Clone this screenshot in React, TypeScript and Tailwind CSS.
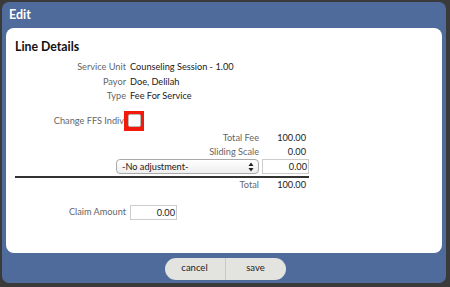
import React from "react";

export default function App() {
  const font = { fontFamily: "Lato, 'Open Sans', sans-serif" };
  return (
    <div style={font} className="w-[450px] h-[287px] bg-[#3a3a3a] pt-[2px] pl-[2px] pr-[4px] pb-[4px]">
      <div className="h-full w-full bg-[#4f6b9b] rounded-[7px] flex flex-col">
        <div className="h-[26px] px-[7px] flex items-center text-white text-[12.5px] font-bold pt-[1px]">Edit</div>
        <div className="mx-[4px] flex-1 bg-white rounded-[8px] pl-[9px] pt-[10px] text-[9.2px] text-[#1a1a1a]">
          <div className="text-[12.3px] font-bold text-[#111] leading-[18px]">Line Details</div>
          <div className="mt-[4px] flex flex-col">
            {[
              ["Service Unit", "Counseling Session - 1.00"],
              ["Payor", "Doe, Delilah"],
              ["Type", "Fee For Service"],
            ].map(([l, v]) => (
              <div key={l} className="flex h-[14.5px] items-center">
                <div className="w-[111px] text-right text-[#666]">{l}</div>
                <div className="ml-[4px]">{v}</div>
              </div>
            ))}
          </div>
          <div className="mt-[7px] flex items-center h-[20px]">
            <div className="w-[109px] text-right text-[#666] whitespace-nowrap">Change FFS Indiv</div>
            <div className="w-[20px] h-[20px] bg-[#f21a0a] flex items-center justify-center">
              <div className="w-[13px] h-[13px] bg-white border border-[#bbb] rounded-[2px]" />
            </div>
          </div>
          <div className="flex flex-col w-[294px]">
            <div className="flex h-[14.5px] items-center">
              <div className="w-[244px] text-right text-[#666]">Total Fee</div>
              <div className="w-[47px] text-right">100.00</div>
            </div>
            <div className="flex h-[14px] items-center">
              <div className="w-[244px] text-right text-[#666]">Sliding Scale</div>
              <div className="w-[47px] text-right">0.00</div>
            </div>
            <div className="flex items-center h-[15px]">
              <div className="ml-[101px] w-[143px] h-[15px] border border-[#aaa] rounded-[4px] bg-gradient-to-b from-white to-[#eee] flex items-center pl-[5px] pr-[4px]">
                <span className="flex-1">-No adjustment-</span>
                <svg width="6" height="10" viewBox="0 0 6 10">
                  <path d="M3 0.5 L5.5 4 H0.5 Z M3 9.5 L5.5 6 H0.5 Z" fill="#222" />
                </svg>
              </div>
              <div className="ml-[3px] w-[47px] h-[15px] border border-[#ccc] text-right pr-[1px] leading-[13px]">0.00</div>
            </div>
            <div className="mt-[2px] h-[1.5px] bg-[#333] w-[294px]" />
            <div className="flex h-[15px] items-center">
              <div className="w-[244px] text-right text-[#666]">Total</div>
              <div className="w-[47px] text-right">100.00</div>
            </div>
          </div>
          <div className="mt-[12px] flex items-center">
            <div className="w-[111px] text-right text-[#666]">Claim Amount</div>
            <div className="ml-[4px] w-[47px] h-[15px] border border-[#ccc] text-right pr-[1px] leading-[13px]">0.00</div>
          </div>
        </div>
        <div className="h-[30px] flex items-center justify-center pt-[1px] pl-[2px]">
          <div className="flex h-[22px] text-[9.5px] text-[#222]">
            <div className="w-[61px] bg-[#e3e3df] rounded-l-[11px] flex items-center justify-center border-r border-[#c8c8c4]">cancel</div>
            <div className="w-[60px] bg-[#e3e3df] rounded-r-[11px] flex items-center justify-center">save</div>
          </div>
        </div>
      </div>
    </div>
  );
}
